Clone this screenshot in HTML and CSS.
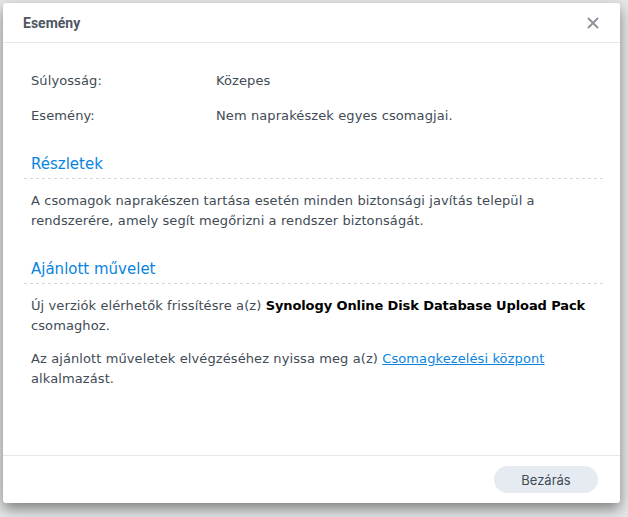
FILE: index.html
```html
<!DOCTYPE html>
<html lang="hu">
<head>
<meta charset="utf-8">
<title>Esemény</title>
<link rel="stylesheet" href="styles.css">
</head>
<body>
<div class="backdrop">
  <div class="dialog">
    <div class="header">
      <span class="title">Esemény</span>
      <svg class="close" width="12" height="12" viewBox="0 0 12 12"><path d="M1.5 1.5 L10.5 10.5 M10.5 1.5 L1.5 10.5" stroke="#8d949c" stroke-width="2" stroke-linecap="round"/></svg>
    </div>
    <div class="body">
      <div class="row"><span class="label">Súlyosság:</span><span class="value">Közepes</span></div>
      <div class="row second"><span class="label">Esemény:</span><span class="value">Nem naprakészek egyes csomagjai.</span></div>
      <h2 class="section">Részletek</h2>
      <p class="para">A csomagok naprakészen tartása esetén minden biztonsági javítás települ a rendszerére, amely segít megőrizni a rendszer biztonságát.</p>
      <h2 class="section">Ajánlott művelet</h2>
      <p class="para">Új verziók elérhetők frissítésre a(z) <b>Synology Online Disk Database Upload Pack</b> csomaghoz.</p>
      <p class="para next">Az ajánlott műveletek elvégzéséhez nyissa meg a(z) <a class="link" href="#">Csomagkezelési központ</a> alkalmazást.</p>
    </div>
    <div class="footer">
      <button class="btn">Bezárás</button>
    </div>
  </div>
</div>
</body>
</html>
```
FILE: styles.css
```css
html, body {
  margin: 0;
  padding: 0;
}
body {
  background: #e6e7e8;
  width: 628px;
  height: 517px;
  overflow: hidden;
  font-family: "DejaVu Sans", Verdana, sans-serif;
}
.backdrop {
  padding: 3px 0 0 3px;
}
.dialog {
  width: 617px;
  height: 500px;
  background: #fff;
  border-radius: 3px;
  box-shadow: 0 6px 14px rgba(0, 0, 0, 0.45);
  display: flex;
  flex-direction: column;
}
.header {
  height: 39px;
  border-bottom: 1px solid #e3e8ee;
  display: flex;
  align-items: center;
  justify-content: space-between;
  padding: 0 21px 0 20px;
}
.title {
  font-family: Roboto, "Open Sans", sans-serif;
  font-weight: bold;
  font-size: 14px;
  color: #4f5763;
}
.close {
  display: block;
}
.body {
  flex: 1;
  padding: 28px 16px 0 21px;
  color: #414b55;
  font-size: 13px;
  letter-spacing: 0.1px;
}
.row {
  display: flex;
  line-height: 20px;
  padding-left: 7px;
}
.row.second {
  margin-top: 15px;
}
.label {
  width: 185px;
}
.section {
  margin: 28px 0 0 0;
  padding: 0 0 5px 7px;
  font-weight: normal;
  font-size: 15px;
  line-height: 20px;
  letter-spacing: 0;
  color: #0a84e0;
  background-image: linear-gradient(to right, #d3d8de 3px, transparent 3px);
  background-size: 6px 1px;
  background-repeat: repeat-x;
  background-position: 0 100%;
}
.section + .para {
  margin-top: 12px;
}
.para {
  margin: 0;
  padding-left: 7px;
  line-height: 20px;
}
.para.next {
  margin-top: 13px;
}
.para b {
  color: #000;
  letter-spacing: -0.1px;
}
.link {
  color: #0a84e0;
  text-decoration: underline;
}
.footer {
  height: 47px;
  border-top: 1px solid #e3e8ee;
  display: flex;
  align-items: center;
  justify-content: flex-end;
  padding-right: 22px;
}
.btn {
  width: 104px;
  height: 27px;
  border: none;
  border-radius: 14px;
  background: #e6ebf2;
  color: #414b55;
  font-family: Inter, Roboto, sans-serif;
  font-size: 13px;
  padding: 0;
}
```
